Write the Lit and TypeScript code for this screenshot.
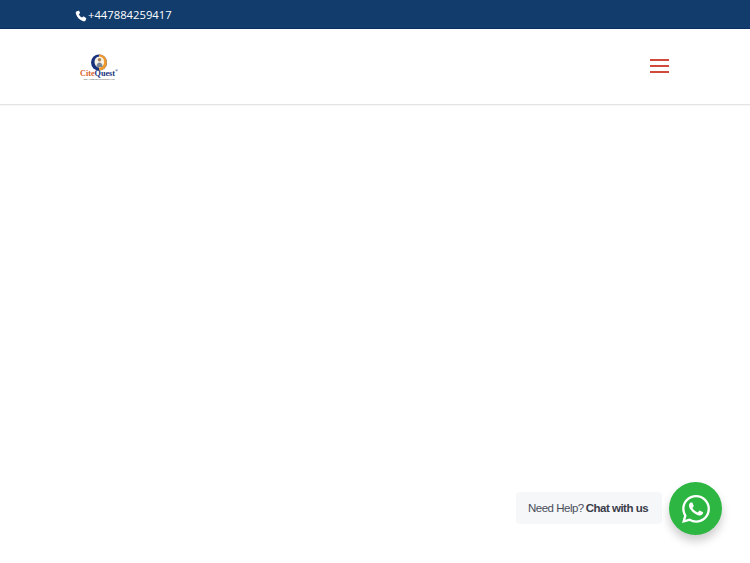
import { LitElement, html, css } from "lit";
import { customElement } from "lit/decorators.js";

@customElement("app-root")
export class AppRoot extends LitElement {
  static styles = css`
    :host { display: block; height: 563px; background: #fff; overflow: hidden; position: relative; font-family: "Open Sans", sans-serif; }
    .top { height: 29px; box-sizing: border-box; background: #123c6c; border-bottom: 1px solid #0b2f63; padding: 6px 0 0 75px; display: flex; align-items: flex-start; gap: 1px; color: #fff; font-size: 11.25px; line-height: 18px; font-weight: 500; }
    .phone { width: 12px; height: 12px; margin-top: 4px; display: block; }
    .head { height: 76px; box-sizing: border-box; border-bottom: 1px solid #e4e4e4; box-shadow: 0 1px 0 rgba(0,0,0,.03); padding: 25px 81px 0 80px; display: flex; justify-content: space-between; align-items: flex-start; }
    .logo { width: 38px; display: flex; flex-direction: column; align-items: center; }
    .logo svg { width: 18px; height: 17px; display: block; flex: none; }
    .name { font-family: "Liberation Serif", serif; font-size: 8.2px; line-height: 9.2px; margin-top: -2.3px; font-weight: 700; color: #d8612b; white-space: nowrap; }
    .name b { color: #17317c; }
    .name sup { font-size: 4px; color: #17317c; line-height: 0; }
    .tag { font-family: "Liberation Sans", sans-serif; font-size: 2.4px; line-height: 3px; color: #444; white-space: nowrap; }
    .menu { width: 19px; height: 14px; margin: 5px 0 0 0; display: flex; flex-direction: column; justify-content: space-between; }
    .menu i { display: block; height: 2px; background: #cf4a3a; }
    .chat { position: absolute; right: 28px; bottom: 28px; display: flex; align-items: center; gap: 7px; }
    .label { width: 146px; height: 32px; margin-bottom: 2px; box-sizing: border-box; background: #f5f7f9; border-radius: 4px; display: flex; align-items: center; padding-left: 12px; font-family: "Liberation Sans", sans-serif; font-size: 11.5px; letter-spacing: -.5px; color: #4a4e5a; white-space: nowrap; gap: 2px; }
    .label b { color: #3a3d4a; }
    .btn { width: 53px; height: 53px; border-radius: 50%; background: #2db742; box-shadow: 0 6px 10px rgba(0,0,0,.2); display: flex; align-items: center; justify-content: center; }
    .btn svg { width: 28px; height: 28px; display: block; }
  `;

  render() {
    return html`
      <div class="top">
        <svg class="phone" viewBox="0 0 24 24"><path fill="#fff" d="M6.6 1.5 2.8 3.2C1.6 3.9 1.3 5.6 1.8 7.6c2 7 7.6 12.9 14.6 14.8 2 .5 3.7.1 4.4-1.1l1.7-3.6c.3-.7.1-1.4-.5-1.8l-4.4-2.8c-.6-.4-1.3-.3-1.8.2l-1.7 1.9c-2.9-1.3-5.2-3.8-6.5-6.8l1.9-1.6c.5-.5.6-1.2.3-1.8L8.4 2c-.4-.6-1.1-.8-1.8-.5z"/></svg>
        <span>+447884259417</span>
      </div>
      <div class="head">
        <div class="logo">
          <svg viewBox="0 0 18 17">
            <circle cx="9" cy="8.5" r="8" fill="#17317c"/>
            <path d="M9 .5a8 8 0 0 1 0 16z" fill="#ee9a2e"/>
            <ellipse cx="9.3" cy="8" rx="4.8" ry="5.6" fill="#f8f2e6"/>
            <circle cx="9.5" cy="5.8" r="1.8" fill="#a8835a"/>
            <path d="M6.4 13c0-3 1.4-4.6 3.1-4.6s3.1 1.6 3.1 4.6z" fill="#7d8794"/>
          </svg>
          <div class="name">Cite<b>Quest</b><sup>®</sup></div>
          <div class="tag">The Academic Research Hub</div>
        </div>
        <div class="menu"><i></i><i></i><i></i></div>
      </div>
      <div class="chat">
        <div class="label"><span>Need Help?</span><b>Chat with us</b></div>
        <div class="btn">
          <svg viewBox="0 0 24 24"><path fill="#fff" d="M17.47 14.38c-.3-.15-1.76-.87-2.03-.97-.27-.1-.47-.15-.67.15-.2.3-.77.97-.94 1.17-.17.2-.35.22-.65.07-.3-.15-1.26-.46-2.4-1.48-.89-.79-1.49-1.77-1.66-2.07-.17-.3-.02-.46.13-.61.13-.13.3-.35.45-.52.15-.17.2-.3.3-.5.1-.2.05-.37-.02-.52-.08-.15-.67-1.62-.92-2.22-.24-.58-.49-.5-.67-.51h-.57c-.2 0-.52.07-.8.37-.27.3-1.04 1.02-1.04 2.48 0 1.47 1.07 2.88 1.22 3.08.15.2 2.1 3.2 5.08 4.49.71.31 1.26.49 1.69.63.71.23 1.36.2 1.87.12.57-.09 1.76-.72 2-1.41.25-.7.25-1.29.17-1.41-.07-.13-.27-.2-.57-.35zM12.05 21.8h-.01a9.87 9.87 0 0 1-5.03-1.38l-.36-.21-3.74.98 1-3.65-.24-.37a9.86 9.86 0 0 1-1.51-5.26c0-5.45 4.44-9.88 9.89-9.88 2.64 0 5.12 1.03 6.99 2.9a9.82 9.82 0 0 1 2.89 6.99c0 5.45-4.44 9.88-9.88 9.88zM20.46 3.49A11.82 11.82 0 0 0 12.05 0C5.5 0 .16 5.34.16 11.89c0 2.1.55 4.14 1.59 5.95L.06 24l6.3-1.65a11.88 11.88 0 0 0 5.68 1.45h.01c6.55 0 11.89-5.34 11.89-11.89 0-3.18-1.24-6.16-3.48-8.42z"/></svg>
        </div>
      </div>
    `;
  }
}
